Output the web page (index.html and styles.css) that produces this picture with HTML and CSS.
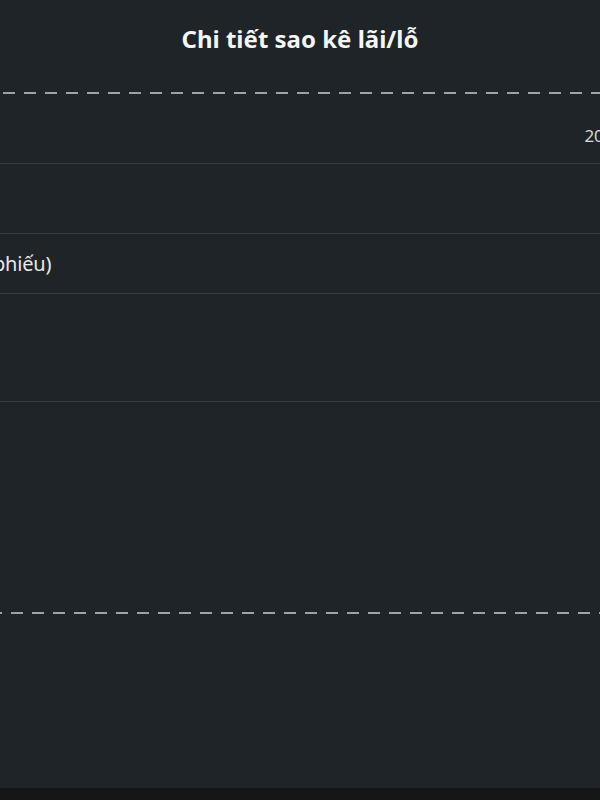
FILE: index.html
```html
<!DOCTYPE html>
<html lang="vi">
<head>
    <meta charset="UTF-8">
    <meta name="viewport" content="width=device-width, initial-scale=1.0">
    <title>Chi tiết sao kê lãi/lỗ</title>
    <link rel="stylesheet" href="styles.css">
</head>
<body>

    <div class="page">
        <h1 class="title">Chi tiết sao kê lãi/lỗ</h1>
        <div class="dash dash-top"></div>

        <div class="detail">
            <div class="row row-time">
                <span class="label">Thời gian</span>
                <span class="value">2024-05-16 14:32:08</span>
            </div>
            <div class="row row-code">
                <span class="label">Mã</span>
            </div>
            <div class="row row-qty">
                <span class="label">Khối lượng (cổ phiếu)</span>
            </div>
            <div class="row row-price">
                <span class="label">Giá</span>
            </div>
        </div>

        <div class="spacer"></div>
        <div class="dash dash-bottom"></div>
        <div class="spacer-end"></div>
    </div>
    <div class="home-bar"></div>

</body>
</html>
```

FILE: styles.css
```css
/* base */
html, body {
    margin: 0;
    padding: 0;
}
body {
    background-color: #1e2428;
    color: #e6e7e8;
    font-family: "Noto Sans", "Open Sans", sans-serif;
    overflow: hidden;
    width: 600px;
    height: 800px;
}

/* the sheet is wider than the window, centred on it */
.page {
    width: 948px;
    margin-left: -174px;
    display: flex;
    flex-direction: column;
    height: 788px;
}

.title {
    margin: 0;
    padding: 22px 0 36px;
    height: 34px;
    line-height: 34px;
    text-align: center;
    font-size: 24px;
    font-weight: 700;
    color: #f4f5f5;
}

.dash {
    height: 2px;
    flex: none;
    background-image: linear-gradient(to right, #9ea3a6 0, #9ea3a6 12px, transparent 12px);
    background-size: 21px 2px;
    background-repeat: repeat-x;
}
.dash-top {
    background-position: 9px 0;
}
.dash-bottom {
    background-position: 17px 0;
}

.detail {
    display: flex;
    flex-direction: column;
}

.row {
    display: flex;
    justify-content: space-between;
    align-items: center;
    padding: 0 16px 0 29px;
    border-bottom: 1px solid #353c40;
    box-sizing: border-box;
}
.row-time {
    height: 70px;
    align-items: flex-start;
    padding-top: 30px;
    padding-right: 29px;
}
.row-code {
    height: 70px;
}
.row-qty {
    height: 60px;
}
.row-price {
    height: 108px;
}

.label {
    font-size: 20px;
    letter-spacing: -0.2px;
    color: #e8e9ea;
}
.value {
    font-size: 17px;
    line-height: 24px;
    color: #d6d8d9;
    white-space: nowrap;
}

.spacer {
    height: 210px;
    flex: none;
}
.spacer-end {
    flex: 1;
}

.home-bar {
    height: 12px;
    background-color: #141618;
}
```
